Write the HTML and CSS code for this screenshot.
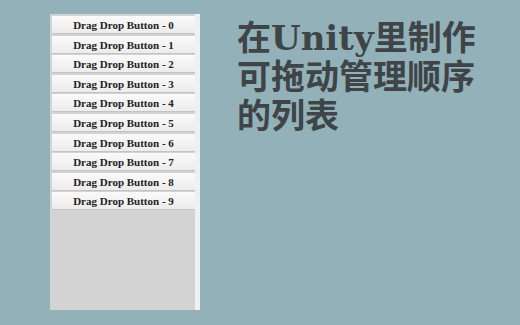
FILE: index.html
```html
<!DOCTYPE html>
<html lang="zh">
    <head>
        <meta charset="UTF-8">
        <meta name="viewport" content="width=device-width, initial-scale=1.0">
        <title>Drag Drop List</title>
        <link rel="stylesheet" href="styles.css">
    </head>
    <body>
        <div class="page">
            <div class="panel">
                <div class="btn">Drag Drop Button - 0</div>
                <div class="btn">Drag Drop Button - 1</div>
                <div class="btn">Drag Drop Button - 2</div>
                <div class="btn">Drag Drop Button - 3</div>
                <div class="btn">Drag Drop Button - 4</div>
                <div class="btn">Drag Drop Button - 5</div>
                <div class="btn">Drag Drop Button - 6</div>
                <div class="btn">Drag Drop Button - 7</div>
                <div class="btn">Drag Drop Button - 8</div>
                <div class="btn">Drag Drop Button - 9</div>
            </div>
            <h1 class="title">在Unity里制作<br>可拖动管理顺序<br>的列表</h1>
        </div>
    </body>
</html>
```

FILE: styles.css
```css
body {
    margin: 0;
    padding: 0;
    background-color: #93b1b9;
}

.page {
    display: flex;
    align-items: flex-start;
    width: 520px;
    height: 325px;
    overflow: hidden;
}

.panel {
    margin: 14px 0 0 50px;
    width: 150px;
    height: 296px;
    padding: 2px 0 0 2px;
    box-sizing: border-box;
    background-color: #d3d3d3;
    border-right: 5px solid #f0f0f0;
    display: flex;
    flex-direction: column;
    gap: 1.6px;
}

.btn {
    height: 17px;
    line-height: 18px;
    background: linear-gradient(#fafafa, #ececec);
    border-bottom: 1px solid #c4c4c4;
    text-align: center;
    font-family: "Liberation Serif", serif;
    font-weight: bold;
    font-size: 11px;
    color: #222;
}

.title {
    margin: 19px 0 0 37px;
    font-family: "DejaVu Serif", "Noto Sans CJK SC", serif;
    font-weight: bold;
    font-size: 34px;
    line-height: 39px;
    color: #3f4447;
}
```
